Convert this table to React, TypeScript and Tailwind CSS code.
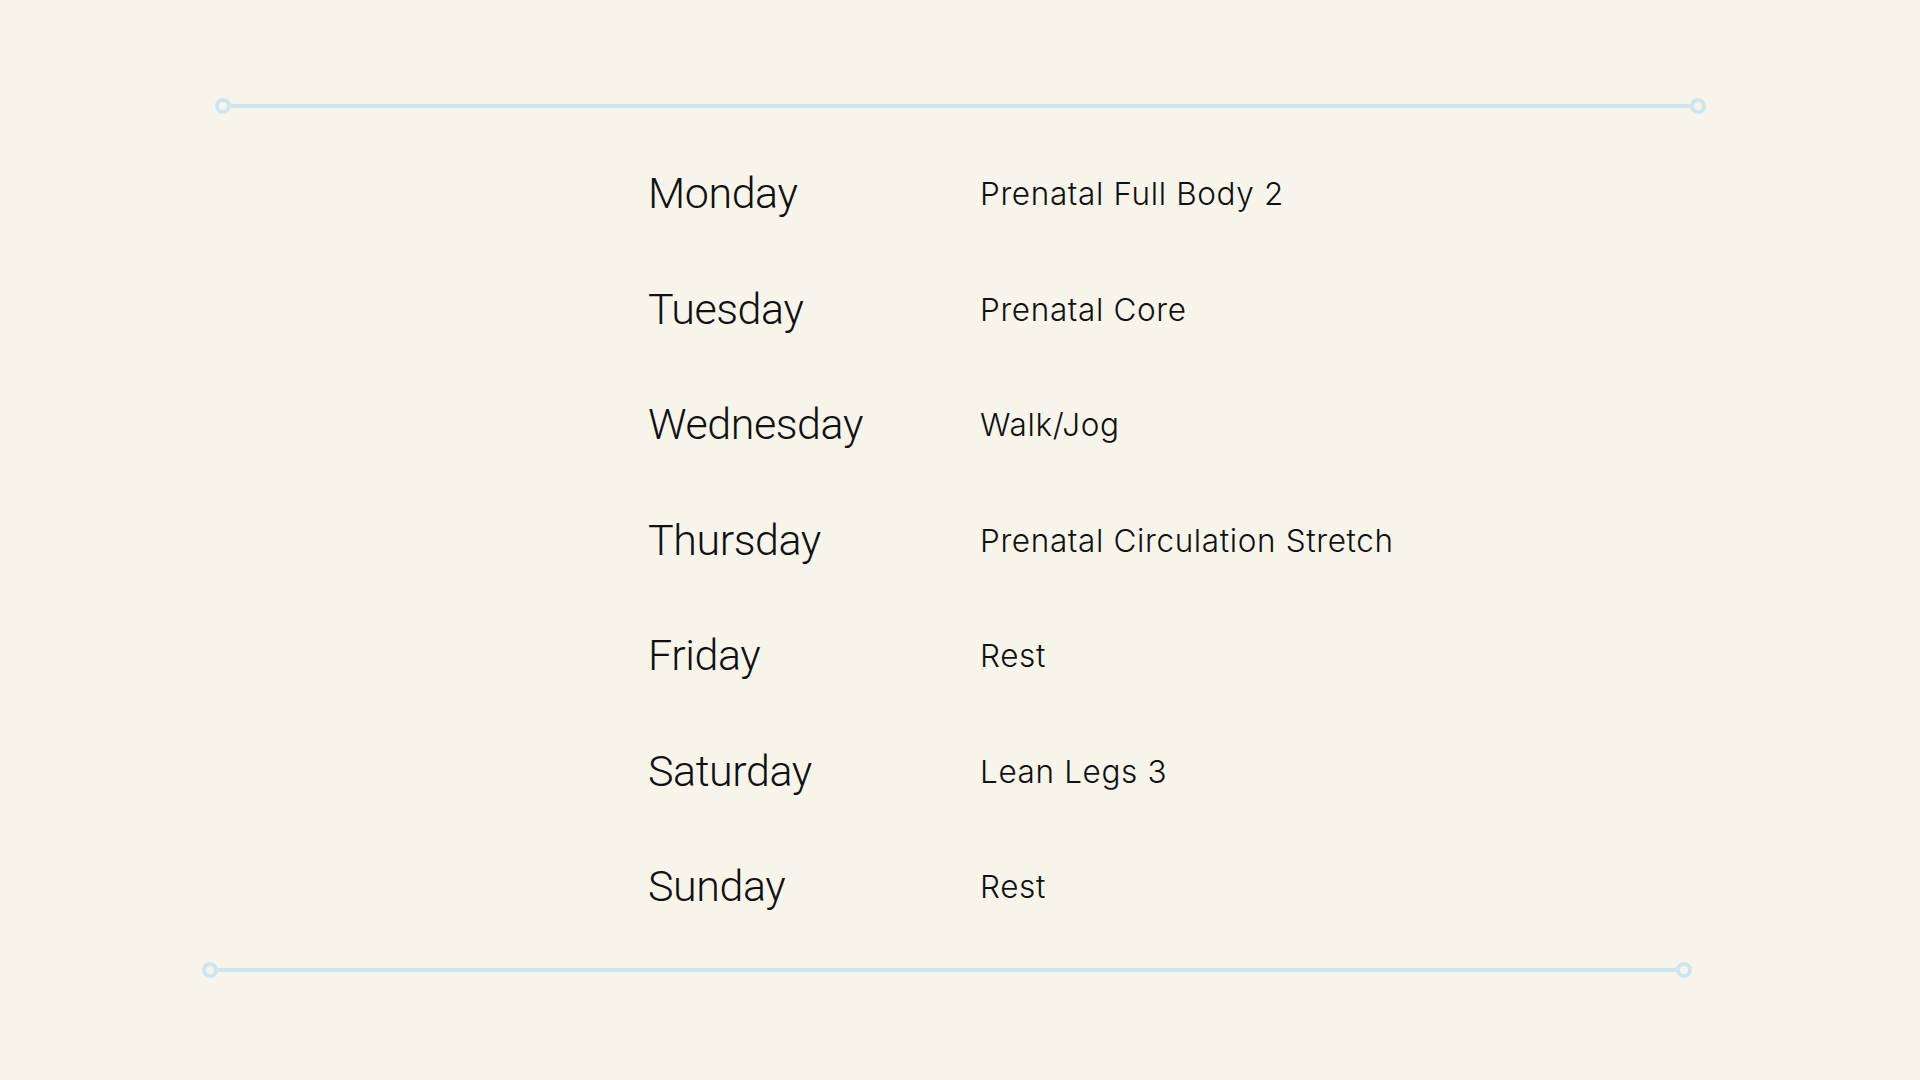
const schedule = [
  { day: 'Monday', workout: 'Prenatal Full Body 2' },
  { day: 'Tuesday', workout: 'Prenatal Core' },
  { day: 'Wednesday', workout: 'Walk/Jog' },
  { day: 'Thursday', workout: 'Prenatal Circulation Stretch' },
  { day: 'Friday', workout: 'Rest' },
  { day: 'Saturday', workout: 'Lean Legs 3' },
  { day: 'Sunday', workout: 'Rest' },
];

function Rule({ className }: { className: string }) {
  return (
    <div className={`flex items-center ${className}`}>
      <span className="h-4 w-4 shrink-0 rounded-full border-4 border-[#cbe6f0]" />
      <span className="h-1 flex-1 bg-[#cbe6f0]" />
      <span className="h-4 w-4 shrink-0 rounded-full border-4 border-[#cbe6f0]" />
    </div>
  );
}

export default function App() {
  return (
    <div className="min-h-screen w-full bg-[#f7f5ea] pt-[98px] text-[#111111]">
      {/* Top rule */}
      <Rule className="ml-[215px] w-[1491px]" />

      {/* Weekly schedule */}
      <div className="mt-[22px] pl-[648px]">
        {schedule.map((row) => (
          <div key={row.day} className="flex h-[115.5px] items-center">
            <span className="w-[332px] font-['Roboto',sans-serif] text-[43px] font-light leading-none tracking-[-0.01em]">
              {row.day}
            </span>
            <span className="font-['Inter',sans-serif] text-[31.5px] font-[350] leading-none tracking-[0.02em]">
              {row.workout}
            </span>
          </div>
        ))}
      </div>

      {/* Bottom rule */}
      <Rule className="ml-[202px] mt-[17px] w-[1490px]" />
    </div>
  );
}
